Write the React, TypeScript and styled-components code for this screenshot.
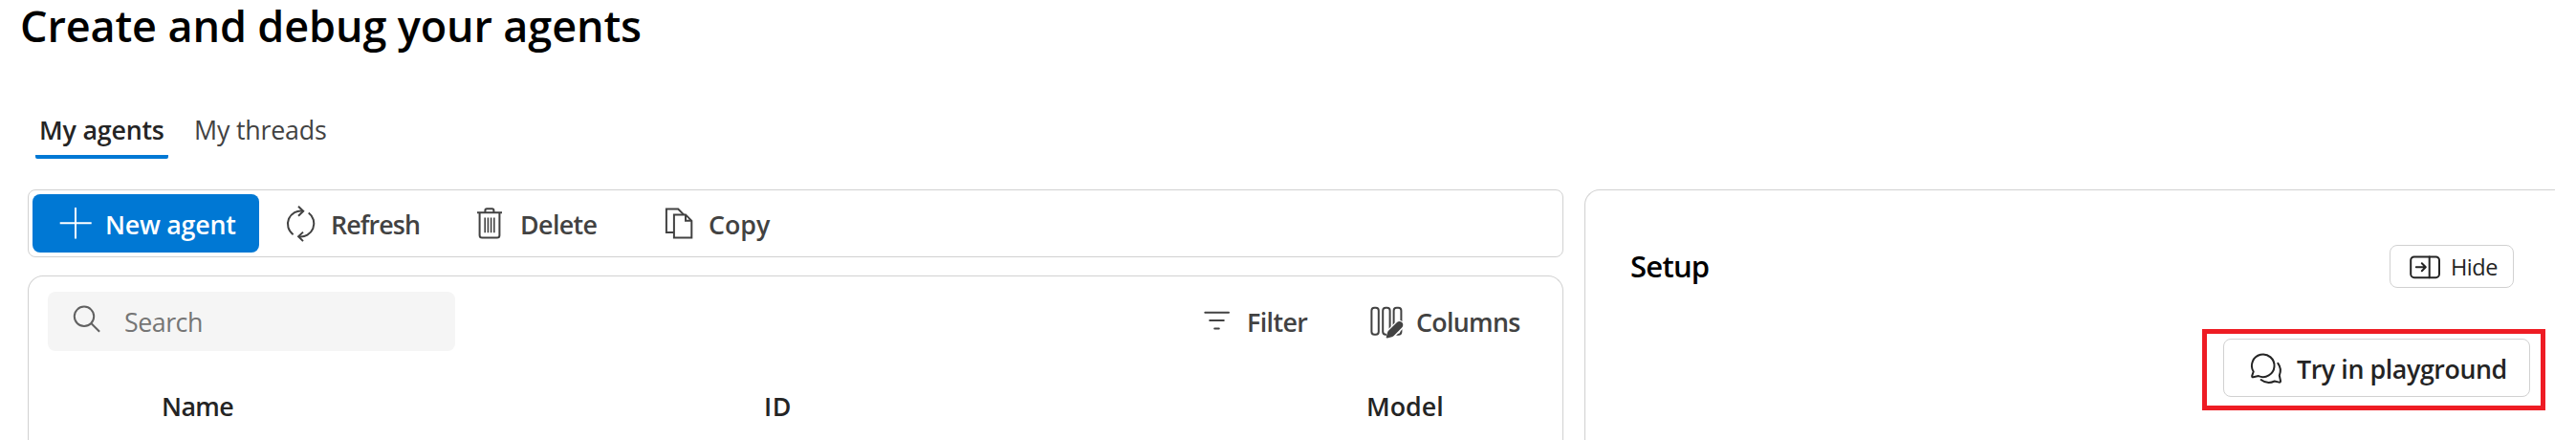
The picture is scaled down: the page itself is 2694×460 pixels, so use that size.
import React from 'react';
import styled, { createGlobalStyle } from 'styled-components';

const GlobalStyle = createGlobalStyle`
  * { box-sizing: border-box; }
  body {
    margin: 0;
    background: #fff;
    color: #242424;
    font-family: 'Segoe UI', 'Open Sans', 'Noto Sans', sans-serif;
    font-size: 26.8px;
  }
`;

const Page = styled.main`
  height: 460px;
  padding-left: 29px;
  overflow: hidden;
  background: #fff;
`;

const Title = styled.h1`
  margin: 0 0 55px -8px;
  color: #000;
  font-size: 45px;
  font-weight: 600;
  line-height: 54px;
  letter-spacing: -0.13px;
  white-space: nowrap;
`;

const TabList = styled.nav`
  display: flex;
  gap: 23px;
  margin: 0 0 32px 8px;
`;

const Tab = styled.a<{ $active?: boolean }>`
  width: 139px;
  height: 57px;
  padding-left: 4px;
  border-bottom: 4px solid ${p => (p.$active ? '#0078d4' : 'transparent')};
  border-radius: 2px;
  color: ${p => (p.$active ? '#242424' : '#424242')};
  font-weight: ${p => (p.$active ? 600 : 400)};
  line-height: 53px;
  letter-spacing: -0.2px;
  white-space: nowrap;
`;

const Workspace = styled.div`
  display: flex;
  gap: 22px;
`;

const AgentsColumn = styled.section`
  display: flex;
  flex-direction: column;
  gap: 19px;
  width: 1606px;
`;

const Toolbar = styled.div`
  display: flex;
  align-items: center;
  height: 71px;
  padding: 4px;
  border: 1px solid #d1d1d1;
  border-radius: 8px;
`;

const Label = styled.span<{ $spacing?: number }>`
  letter-spacing: ${p => p.$spacing ?? 0}px;
  white-space: nowrap;
`;

const ButtonLabel = styled(Label)`
  padding-top: 2px;
`;

const PrimaryButton = styled.button`
  display: flex;
  align-items: center;
  gap: 16px;
  width: 237px;
  height: 61px;
  margin-right: 28px;
  padding: 0 0 0 28px;
  border: 0;
  border-radius: 8px;
  background: #0078d4;
  color: #fff;
  font: inherit;
  font-weight: 600;
`;

const ToolButton = styled.button<{ $width: number; $gap?: number }>`
  display: flex;
  align-items: center;
  gap: ${p => p.$gap ?? 15}px;
  width: ${p => p.$width}px;
  height: 61px;
  padding: 0;
  border: 0;
  background: none;
  color: #424242;
  font: inherit;
  font-weight: 600;
`;

const Icon = styled.svg`
  flex: none;
  overflow: visible;
  fill: none;
  stroke: currentColor;
  stroke-width: 2;
`;

const TablePanel = styled.div`
  height: 172px;
  padding: 16px 42px 0 20px;
  border: 1px solid #d1d1d1;
  border-bottom: 0;
  border-radius: 16px 16px 0 0;
`;

const FilterRow = styled.div`
  display: flex;
  align-items: center;
  height: 62px;
`;

const SearchBox = styled.div`
  display: flex;
  align-items: center;
  gap: 24px;
  width: 426px;
  height: 62px;
  margin-right: auto;
  padding-left: 26px;
  border-radius: 8px;
  background: #f5f5f5;
  color: #616161;
`;

const Placeholder = styled(Label)`
  color: #757575;
`;

const HeaderRow = styled.div`
  display: grid;
  grid-template-columns: 630px 630px 1fr;
  padding: 25px 0 0 119px;
  font-weight: 600;
  line-height: 65px;
`;

const SetupPanel = styled.section`
  display: flex;
  flex-direction: column;
  width: 1015px;
  height: 262px;
  padding: 57px 0 0 47px;
  border: solid #d1d1d1;
  border-width: 1px 0 0 1px;
  border-top-left-radius: 16px;
`;

const SetupHeader = styled.header`
  display: flex;
  align-items: center;
  justify-content: space-between;
  height: 45px;
  padding-right: 43px;
`;

const SetupTitle = styled.h2`
  margin: 0;
  padding-bottom: 2px;
  color: #000;
  font-size: 31px;
  font-weight: 600;
  letter-spacing: -0.75px;
`;

const OutlineButton = styled.button`
  display: flex;
  align-items: center;
  border: 1px solid #d1d1d1;
  border-radius: 8px;
  background: #fff;
  color: #242424;
  font: inherit;
`;

const HideButton = styled(OutlineButton)`
  gap: 11px;
  width: 130px;
  height: 45px;
  padding: 0 0 0 20px;
  font-size: 23.5px;
`;

const PlaygroundButton = styled(OutlineButton)`
  gap: 16px;
  width: 321px;
  height: 61px;
  padding: 0 0 0 28px;
  font-weight: 600;
`;

const Highlight = styled.div`
  align-self: flex-end;
  width: 359px;
  height: 85px;
  margin: 43px 10px 0 0;
  padding: 5px 0 0 17px;
  border: 5px solid #ee1c24;
`;

const AddIcon = () => (
  <Icon width="32" height="40" viewBox="0 0 32 40">
    <path d="M17 3v32.5M.7 19.2h33" />
  </Icon>
);

const RefreshIcon = () => (
  <Icon width="32" height="40" viewBox="0 0 32 40">
    <path d="M18 6.6A13.7 13.7 0 0 0 7.6 31.2M23.7 8.5A13.8 13.8 0 0 1 13.6 33.3" />
    <path d="M13 1.8l5.2 4.9-5.2 5M18 28.6l-4.9 4.7 4.9 4.8" />
  </Icon>
);

const DeleteIcon = () => (
  <Icon width="32" height="40" viewBox="0 0 32 40">
    <path d="M2 8.3h26M10.4 8V6q0-1.700 1.700-1.700h5.600q1.700 0 1.700 1.700v2" />
    <path d="M4.600 8.300V32q0 2.500 2.500 2.500h15.800q2.500 0 2.500-2.500V8.300" />
    <path strokeWidth="1.600" d="M10.200 13.500v15.700M13.400 13.500v15.700M16.600 13.500v15.700M19.800 13.500v15.700" />
  </Icon>
);

const CopyIcon = () => (
  <Icon width="32" height="40" viewBox="0 0 32 40">
    <path d="M10.500 28.900H2.900V4.500H15.200l5.800 5.900" />
    <path d="M10.900 10.400H23L29.300 16.800V34.600H10.900ZM23 10.400V16.800H29.300" />
  </Icon>
);

const SearchIcon = () => (
  <Icon width="30" height="40" viewBox="0 0 30 40">
    <circle cx="12" cy="14.800" r="10.200" />
    <path d="M19.300 22l8.800 8.800" />
  </Icon>
);

const FilterIcon = () => (
  <Icon width="30" height="40" viewBox="0 0 30 40" strokeLinecap="round">
    <path d="M2.300 10.700h24.700M7.200 19.100h14.600M12.200 27.500h4.600" />
  </Icon>
);

const ColumnsIcon = () => (
  <Icon width="38" height="40" viewBox="0 0 38 40">
    <rect x="2.400" y="5.700" width="7.400" height="28" rx="3" />
    <rect x="14.200" y="5.700" width="7.400" height="28" rx="3" />
    <rect x="25.600" y="5.700" width="7.800" height="28" rx="3" />
    <path d="M23 32.500l8.400-8.400" stroke="#fff" strokeWidth="10.500" strokeLinecap="round" />
    <path
      fill="currentColor"
      stroke="none"
      d="M18.800 37.400c-.7.200-1.300-.4-1.100-1.100l1.300-4.600c.2-.8.700-1.500 1.300-2.100l8.400-8.400c1.600-1.600 4-1.600 5.500-.1s1.500 4-.1 5.500l-8.400 8.400c-.6.600-1.300 1-2.100 1.300z"
    />
  </Icon>
);

const PanelHideIcon = () => (
  <Icon width="32" height="24" viewBox="0 0 32 24" strokeLinecap="round" strokeLinejoin="round">
    <rect x="1.200" y="1.400" width="29.800" height="21.800" rx="3.600" />
    <path d="M20.700 1.400v21.800M6.800 12.300h9.800M12.800 8.300l4 4-4 4" />
  </Icon>
);

const ChatIcon = () => (
  <Icon width="32" height="40" viewBox="0 0 32 40" strokeLinecap="round" strokeLinejoin="round">
    <path d="M2.700 23.500A11.800 11.800 0 1 1 8 28.100L2.400 29.200Q.9 29.400 1.200 27.900Z" />
    <path d="M28.300 14.900C31.100 18.600 31.700 22.700 29.800 27.500L31 33.100Q31.200 34.900 29.500 34.600L24.800 33.500C20 35.700 14.500 35.100 10.600 32" />
  </Icon>
);

export default function App() {
  return (
    <>
      <GlobalStyle />
      <Page>
        <Title>Create and debug your agents</Title>
        <TabList>
          <Tab $active>My agents</Tab>
          <Tab>My threads</Tab>
        </TabList>
        <Workspace>
          <AgentsColumn>
            <Toolbar>
              <PrimaryButton>
                <AddIcon />
                <ButtonLabel $spacing={-0.24}>New agent</ButtonLabel>
              </PrimaryButton>
              <ToolButton $width={198}>
                <RefreshIcon />
                <ButtonLabel $spacing={-0.9}>Refresh</ButtonLabel>
              </ToolButton>
              <ToolButton $width={197}>
                <DeleteIcon />
                <ButtonLabel $spacing={-0.6}>Delete</ButtonLabel>
              </ToolButton>
              <ToolButton $width={197}>
                <CopyIcon />
                <ButtonLabel>Copy</ButtonLabel>
              </ToolButton>
            </Toolbar>
            <TablePanel>
              <FilterRow>
                <SearchBox>
                  <SearchIcon />
                  <Placeholder $spacing={-0.5}>Search</Placeholder>
                </SearchBox>
                <ToolButton $width={174} $gap={16}>
                  <FilterIcon />
                  <Label $spacing={-0.6}>Filter</Label>
                </ToolButton>
                <ToolButton $width={160} $gap={11}>
                  <ColumnsIcon />
                  <Label $spacing={-0.7}>Columns</Label>
                </ToolButton>
              </FilterRow>
              <HeaderRow>
                <Label $spacing={-0.6}>Name</Label>
                <Label $spacing={0.6}>ID</Label>
                <Label>Model</Label>
              </HeaderRow>
            </TablePanel>
          </AgentsColumn>
          <SetupPanel>
            <SetupHeader>
              <SetupTitle>Setup</SetupTitle>
              <HideButton>
                <PanelHideIcon />
                <Label $spacing={-0.5}>Hide</Label>
              </HideButton>
            </SetupHeader>
            <Highlight>
              <PlaygroundButton>
                <ChatIcon />
                <ButtonLabel $spacing={-0.42}>Try in playground</ButtonLabel>
              </PlaygroundButton>
            </Highlight>
          </SetupPanel>
        </Workspace>
      </Page>
    </>
  );
}
